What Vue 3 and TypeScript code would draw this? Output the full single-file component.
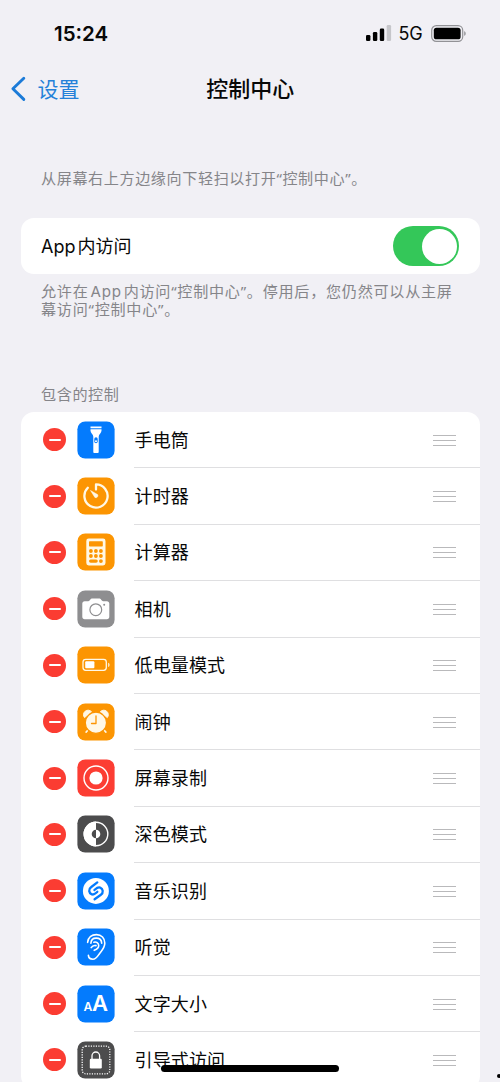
<script setup lang="ts">
interface Control {
  id: string
  label: string
  color: string
}

const controls: Control[] = [
  { id: 'torch', label: '手电筒', color: '#047bfd' },
  { id: 'timer', label: '计时器', color: '#fc9502' },
  { id: 'calculator', label: '计算器', color: '#fc9502' },
  { id: 'camera', label: '相机', color: '#8e8e90' },
  { id: 'battery', label: '低电量模式', color: '#fc9502' },
  { id: 'alarm', label: '闹钟', color: '#fc9502' },
  { id: 'record', label: '屏幕录制', color: '#fc3d33' },
  { id: 'dark', label: '深色模式', color: '#4c4c4d' },
  { id: 'music', label: '音乐识别', color: '#047bfd' },
  { id: 'hearing', label: '听觉', color: '#047bfd' },
  { id: 'text', label: '文字大小', color: '#047bfd' },
  { id: 'guided', label: '引导式访问', color: '#4c4c4d' },
]
</script>

<template>
  <main class="screen">
    <header class="status">
      <span class="time">15:24</span>
      <div class="indicators">
        <svg class="signal" width="26" height="16" viewBox="0 0 26 16">
          <rect x="0" y="10" width="4.4" height="6" rx="1.3" />
          <rect x="6.9" y="7" width="4.4" height="9" rx="1.3" />
          <rect x="13.8" y="3.6" width="4.4" height="12.4" rx="1.3" />
          <rect x="20.7" y="0" width="4.4" height="16" rx="1.3" fill="#c6c6ca" />
        </svg>
        <span class="network">5G</span>
        <svg width="36" height="17" viewBox="0 0 36 17">
          <rect x=".7" y=".7" width="31" height="15.6" rx="4.6" fill="none" stroke="#929296" stroke-width="1.2" />
          <rect x="2.8" y="2.7" width="26.8" height="11.6" rx="2.6" />
          <path d="M33.2 6.2c2 .6 2 4 0 4.600z" fill="#929296" />
        </svg>
      </div>
    </header>

    <nav class="nav">
      <a class="back">
        <svg width="16" height="26" viewBox="0 0 16 26">
          <path d="M13.800 2.200 2.900 12.800 13.800 23.400" fill="none" stroke="#1c7bd8" stroke-width="2.900" stroke-linecap="round" stroke-linejoin="round" />
        </svg>
        <span>设置</span>
      </a>
      <h1>控制中心</h1>
    </nav>

    <p class="note intro">从屏幕右上方边缘向下轻扫以打开“控制中心”。</p>

    <section class="card access">
      <span class="label app-label"><span class="latin">App</span>内访问</span>
      <span class="switch"><i></i></span>
    </section>
    <p class="note footer">允许在<span class="latin-note">App</span>内访问“控制中心”。停用后，您仍然可以从主屏<br>幕访问“控制中心”。</p>

    <h2 class="note heading">包含的控制</h2>

    <ul class="card list">
      <li v-for="c in controls" :key="c.id" class="row">
        <span class="remove"><i></i></span>
        <svg class="icon" width="38" height="38" viewBox="0 0 38 38">
          <rect x=".4" y=".4" width="37.200" height="37.200" rx="7.800" :fill="c.color" />
          <g v-if="c.id === 'torch'" fill="#fff">
            <path d="M13.500 5.600h11v1.600h-11zM13.500 8.200h11v1.500c0 2.300-2.800 3.400-2.800 6v15.200c0 .7-.5 1.200-1.200 1.200h-3c-.7 0-1.200-.5-1.200-1.200V15.700c0-2.600-2.800-3.700-2.800-6z" />
            <rect x="17.300" y="16.300" width="3.400" height="6" rx="1.700" :fill="c.color" />
            <circle cx="19" cy="20.300" r="1" />
          </g>
          <g v-else-if="c.id === 'timer'">
            <path d="M19 12.500V7.400a11.600 11.600 0 1 1-8.200 3.400" fill="none" stroke="#fff8e6" stroke-width="2.300" stroke-linecap="round" stroke-linejoin="round" />
            <path d="M13.500 13.500 20.600 17.600a2 2 0 0 1-2.700 2.800z" fill="#fff8e6" stroke="#fff8e6" stroke-width=".5" stroke-linejoin="round" />
          </g>
          <g v-else-if="c.id === 'calculator'">
            <rect x="9.300" y="5.500" width="19.200" height="27" rx="2.400" fill="#fff8e6" />
            <g :fill="c.color">
              <rect x="12" y="8.300" width="13.800" height="5.200" rx=".7" />
              <circle cx="13.900" cy="18" r="1.900" /><circle cx="18.900" cy="18" r="1.900" /><circle cx="23.900" cy="18" r="1.900" />
              <circle cx="13.900" cy="23" r="1.900" /><circle cx="18.900" cy="23" r="1.900" /><circle cx="23.900" cy="23" r="1.900" />
              <rect x="12" y="26.400" width="8.800" height="3.400" rx="1.700" /><circle cx="23.900" cy="28.100" r="1.900" />
            </g>
          </g>
          <g v-else-if="c.id === 'camera'">
            <path d="M7.700 11.200h3.600c1.600 0 1.900-2.800 3.400-2.800h8c1.500 0 1.800 2.800 3.400 2.800h3.800c1.500 0 2.400.9 2.400 2.400v13.200c0 1.500-.9 2.400-2.400 2.400H7.700c-1.500 0-2.400-.9-2.400-2.400V13.600c0-1.500.9-2.400 2.400-2.400z" fill="#fff" />
            <circle cx="18.800" cy="19.700" r="5.900" fill="none" :stroke="c.color" stroke-width="1.200" />
            <circle cx="27.200" cy="14.700" r="1" :fill="c.color" />
          </g>
          <g v-else-if="c.id === 'battery'">
            <rect x="6" y="13.300" width="23.300" height="11" rx="2.700" fill="none" stroke="#fff8e6" stroke-width="1.300" />
            <rect x="8.200" y="15.300" width="9.200" height="7" rx="1" fill="#fff" />
            <path d="M31.200 16.700c1.800.5 1.800 3.700 0 4.200z" fill="#fff8e6" />
          </g>
          <g v-else-if="c.id === 'alarm'" fill="#fff8e6">
            <path d="M7.500 14.600A4.300 4.300 0 0 1 14.600 8.900zM30.300 14.600A4.300 4.300 0 0 0 23.200 8.900z" stroke="#fff8e6" stroke-linejoin="round" />
            <path d="m11.500 26.500-2.400 2.600m17.400-2.600 2.400 2.600" stroke="#fff8e6" stroke-width="1.600" stroke-linecap="round" />
            <circle cx="18.900" cy="19.800" r="10.600" :stroke="c.color" stroke-width="1.200" />
            <path d="M19 13v7.500h-4.500" fill="none" :stroke="c.color" stroke-width="1.300" stroke-linecap="round" stroke-linejoin="round" />
          </g>
          <g v-else-if="c.id === 'record'">
            <circle cx="19" cy="19" r="12" fill="none" stroke="#fff" stroke-width="1.400" />
            <circle cx="19" cy="19" r="6.600" fill="#fff" />
          </g>
          <g v-else-if="c.id === 'dark'">
            <circle cx="19" cy="19" r="11.800" fill="none" stroke="#fff" stroke-width="1.400" />
            <path d="M19 6.500a12.500 12.500 0 0 0 0 25v-8.200a4.300 4.300 0 0 1 0-8.600z" fill="#fff" />
            <path d="M19 14.700a4.300 4.300 0 0 1 0 8.600z" fill="#fff" />
          </g>
          <g v-else-if="c.id === 'music'">
            <circle cx="18.900" cy="18.900" r="13" fill="#fff" />
            <path d="M20.300 10.400 14 15.200a4 4 0 0 0 .8 7.100c2.400 1 3.600-.9 5.500-2.500M17.400 18.100c1.800-1.600 3.400-3.500 5.800-2.500a4 4 0 0 1 .7 7.100l-6.300 4.600" fill="none" :stroke="c.color" stroke-width="2.300" stroke-linecap="round" />
          </g>
          <g v-else-if="c.id === 'hearing'" fill="none" stroke="#fff" stroke-width="1.600" stroke-linecap="round" stroke-linejoin="round">
            <path d="M10.600 14.400C11 9.500 14.600 6.600 19.500 6.600c5 0 8.300 3.500 8.300 8.500 0 4.700-2.800 7.300-5 10.100-2 2.600-3.400 6-6.900 6-2.700 0-4.400-1.700-4.500-3.800" />
            <path d="M13.900 15.200c.2-3.200 2.300-5.100 5.300-5.100 3.300 0 5.400 2.100 5.500 5.200M14.200 19.600c1.100-1.800 2.900-2.400 4.800-2m-2.100-3.400c2.500-.7 4.700.8 4.800 3.300.1 2.400-1.700 3.700-4.500 4.800" />
          </g>
          <g v-else-if="c.id === 'text'" fill="#fff" font-family="Inter, sans-serif" font-weight="600">
            <text x="6.500" y="26.400" font-size="12.200">A</text>
            <text x="15" y="26.400" font-size="22">A</text>
          </g>
          <g v-else fill="#fff">
            <rect x="5.200" y="5.200" width="27.600" height="27.600" rx="3.600" fill="none" stroke="#fff" stroke-width="1.300" stroke-dasharray="1.200 1.300" />
            <rect x="12.800" y="17.700" width="12" height="9.700" rx="1.200" />
            <path d="M15 18v-3.200a3.800 3.800 0 0 1 7.600 0V18" fill="none" stroke="#fff" stroke-width="1.300" />
          </g>
        </svg>
        <div class="body">
          <span class="label">{{ c.label }}</span>
          <span class="grip"><i></i><i></i><i></i></span>
        </div>
      </li>
    </ul>

    <div class="home"></div>
    <div class="speck"></div>
  </main>
</template>

<style>
body {
  margin: 0;
  background: #f1f0f5;
}
</style>

<style scoped>
.screen {
  position: relative;
  box-sizing: border-box;
  width: 500px;
  height: 1082px;
  overflow: hidden;
  padding: 0 20.500px 0 21px;
  background: #f1f0f5;
  color: #080808;
  font-family: Inter, "Noto Sans CJK SC", sans-serif;
}
.status {
  display: flex;
  justify-content: space-between;
  align-items: center;
  height: 66px;
  padding: 0 13px 0 33px;
}
.time {
  font-size: 20.500px;
  font-weight: 600;
}
.indicators {
  display: flex;
  align-items: center;
}
.network {
  margin: 1px 8px 0 7px;
  font-size: 18px;
  font-weight: 400;
  letter-spacing: -0.200px;
  line-height: 20px;
}
.nav {
  display: grid;
  grid-template-columns: 1fr auto 1fr;
  align-items: center;
  height: 46px;
  margin: 0 -11px;
}
.back {
  display: flex;
  align-items: center;
  gap: 11.500px;
  color: #2481d9;
  font-size: 21px;
  line-height: 30px;
}
.back span {
  padding-top: 1px;
}
h1 {
  margin: 0;
  font-size: 22px;
  font-weight: 500;
  line-height: 30px;
}
.note {
  margin: 0 0 0 20px;
  color: #858589;
  font-family: "Noto Sans", "Noto Sans CJK SC", sans-serif;
  font-size: 15.100px;
  font-weight: 400;
  letter-spacing: 0.600px;
  line-height: 18px;
  white-space: nowrap;
}
.intro {
  padding-top: 57px;
}
.card {
  margin: 0;
  padding: 0;
  background: #fff;
  border-radius: 13px;
}
.access {
  display: flex;
  align-items: center;
  justify-content: space-between;
  box-sizing: border-box;
  height: 56px;
  margin-top: 31px;
  padding: 0 20.500px 0 20px;
}
.label {
  padding-top: 2px;
  font-size: 18px;
  letter-spacing: 0.150px;
  line-height: 26px;
}
.app-label {
  letter-spacing: 0;
}
.latin {
  margin-right: 2px;
}
.latin-note {
  margin: 0 2px;
  font-family: Inter, sans-serif;
  line-height: 1;
}
.switch {
  display: flex;
  justify-content: flex-end;
  box-sizing: border-box;
  width: 66px;
  height: 40px;
  padding: 2.500px;
  border-radius: 20px;
  background: #34c759;
}
.switch i {
  width: 35px;
  height: 35px;
  border-radius: 50%;
  background: #fff;
}
.footer {
  padding-top: 8px;
  letter-spacing: 0.740px;
}
.heading {
  padding-top: 67px;
}
.list {
  margin-top: 9px;
  list-style: none;
}
.row {
  display: flex;
  align-items: center;
  height: 56.400px;
  padding-left: 22px;
}
.remove {
  display: flex;
  align-items: center;
  justify-content: center;
  width: 23px;
  height: 23px;
  margin-bottom: 1px;
  border-radius: 50%;
  background: #fb3c32;
}
.remove i {
  width: 12px;
  height: 2px;
  border-radius: 1px;
  background: #fff;
}
.icon {
  margin-bottom: 1px;
  margin-left: 11px;
}
.body {
  display: flex;
  flex: 1;
  align-items: center;
  justify-content: space-between;
  box-sizing: border-box;
  height: 100%;
  margin-left: 19px;
  padding-right: 23.500px;
  padding-left: 0.500px;
  border-bottom: 1px solid #dfdfe1;
}
.grip {
  display: flex;
  flex-direction: column;
  gap: 4px;
  width: 23px;
  padding-top: 1px;
}
.grip i {
  height: 1px;
  background: #b9b9bb;
}
.home {
  position: absolute;
  left: 161px;
  top: 1065px;
  width: 178px;
  height: 6.500px;
  border-radius: 4px;
  background: #000;
}
.speck {
  position: absolute;
  left: 497px;
  top: 1074px;
  width: 4px;
  height: 4px;
  border-radius: 50%;
  background: #000;
}
</style>
